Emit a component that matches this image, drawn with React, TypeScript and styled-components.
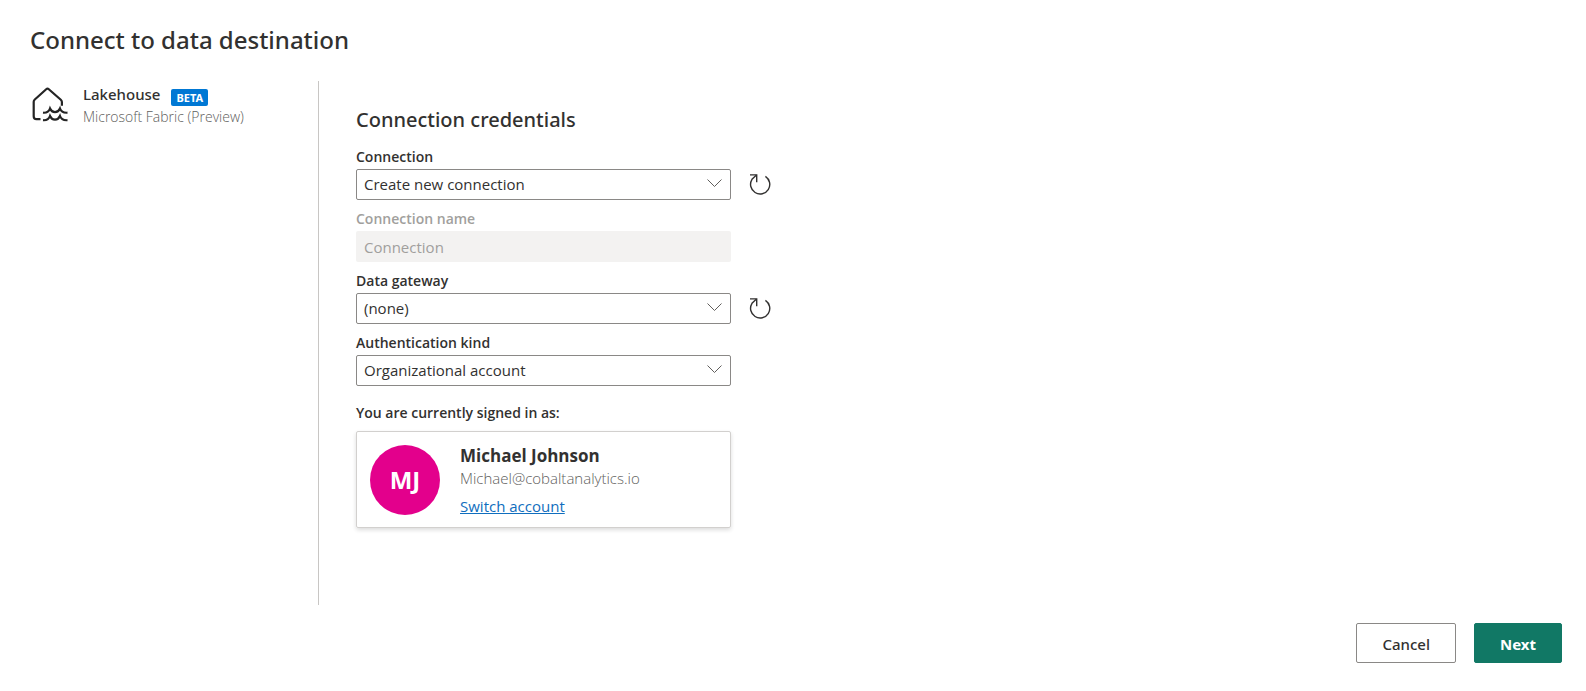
import React from "react";
import styled, { createGlobalStyle } from "styled-components";

const mediumFont = `"Segoe UI", "Noto Sans", sans-serif`;

const GlobalStyle = createGlobalStyle`
  *, *::before, *::after { box-sizing: border-box; }
  body {
    margin: 0;
    background: #fff;
    color: #323130;
    font-family: "Segoe UI", "Open Sans", "Noto Sans", sans-serif;
    font-size: 15px;
    line-height: 20px;
  }
  button, input, select { font: inherit; color: inherit; }
`;

const Page = styled.div`
  display: flex;
  flex-direction: column;
  min-height: 100vh;
  padding: 24px 24px 28px 30px;
`;

const Title = styled.h1`
  margin: 0;
  font-family: ${mediumFont};
  font-size: 24px;
  line-height: 32px;
  font-weight: 500;
`;

const Body = styled.div`
  display: flex;
  flex: 1;
  margin: 25px 0 18px;
`;

const Source = styled.aside`
  display: flex;
  align-items: flex-start;
  gap: 15px;
  width: 289px;
  padding-top: 3px;
  border-right: 1px solid #c8c6c4;
`;

const SourceName = styled.div`
  display: flex;
  align-items: flex-start;
  gap: 11px;
  font-family: ${mediumFont};
  font-size: 15px;
  line-height: 20px;
  font-weight: 500;
`;

const Badge = styled.span`
  margin-top: 5px;
  padding: 0 5px;
  border-radius: 2px;
  background: #0078d4;
  color: #fff;
  font-size: 11px;
  line-height: 17px;
  font-weight: 700;
`;

const Muted = styled.div<{ $size: number }>`
  font-size: ${(p) => p.$size}px;
  line-height: 22px;
  font-weight: 300;
  color: #605e5c;
`;

const Form = styled.form`
  flex: 1;
  padding: 24px 0 0 37px;
`;

const SectionTitle = styled.h2`
  margin: 0 0 12px;
  font-family: ${mediumFont};
  font-size: 20px;
  line-height: 30px;
  font-weight: 500;
`;

const Field = styled.div`
  display: flex;
  flex-direction: column;
  gap: 2px;
  margin-bottom: 9px;
`;

const Label = styled.label<{ $disabled?: boolean }>`
  font-size: 14px;
  line-height: 20px;
  font-weight: 600;
  color: ${(p) => (p.$disabled ? "#a19f9d" : "#323130")};
`;

const Row = styled.div`
  display: flex;
  align-items: center;
  gap: 18px;
`;

const SelectBox = styled.div`
  position: relative;
  width: 375px;
`;

const Select = styled.select`
  display: block;
  width: 100%;
  height: 31px;
  padding: 0 32px 1px 7px;
  border: 1px solid #8a8886;
  border-radius: 2px;
  background: #fff;
  appearance: none;
`;

const Chevron = styled.svg`
  position: absolute;
  top: 9px;
  right: 9px;
  pointer-events: none;
`;

const TextInput = styled.input`
  width: 375px;
  height: 31px;
  padding: 0 8px;
  border: 0;
  border-radius: 2px;
  background: #f3f2f1;
  color: #a19f9d;
  &::placeholder { color: #a19f9d; opacity: 1; }
`;

const IconButton = styled.button`
  display: flex;
  padding: 0;
  border: 0;
  background: none;
`;

const SignedIn = styled.p`
  margin: 17px 0 8px;
  font-size: 14px;
  line-height: 20px;
  font-weight: 600;
`;

const Card = styled.section`
  display: flex;
  gap: 20px;
  width: 375px;
  padding: 12px 13px 11px;
  border: 1px solid #d2d0ce;
  border-radius: 2px;
  box-shadow: 0 2px 4px rgba(0, 0, 0, 0.14);
`;

const Avatar = styled.div`
  display: grid;
  place-items: center;
  width: 70px;
  height: 70px;
  margin-top: 1px;
  border-radius: 50%;
  background: #e3008c;
  color: #fff;
  font-size: 24px;
  font-weight: 700;
`;

const Person = styled.div`
  display: flex;
  flex-direction: column;
  align-items: flex-start;
`;

const PersonName = styled.div`
  font-size: 17px;
  line-height: 23px;
  font-weight: 700;
`;

const Link = styled.a`
  margin-top: 7px;
  color: #106ebe;
  line-height: 20px;
`;

const Footer = styled.footer`
  display: flex;
  justify-content: flex-end;
  gap: 18px;
`;

const Button = styled.button<{ $primary?: boolean }>`
  height: 40px;
  padding: 1px 25px 0;
  border: 1px solid ${(p) => (p.$primary ? "#117865" : "#8a8886")};
  border-radius: 2px;
  background: ${(p) => (p.$primary ? "#117865" : "#fff")};
  color: ${(p) => (p.$primary ? "#fff" : "#323130")};
  font-family: ${mediumFont};
  font-weight: ${(p) => (p.$primary ? 700 : 500)};
`;

const LakehouseIcon = () => (
  <svg width="38" height="38" viewBox="0 0 38 38" fill="none" stroke="#242424" strokeWidth="2.2" aria-hidden="true">
    <path d="M10.500 35.200H6.500Q3.700 35.200 3.700 32.200V17.800Q3.700 16.500 4.800 15.500L16.200 5.200Q17.500 4 18.800 5.200L30.800 15.800Q31.900 16.800 31.900 18V21.800" />
    <path d="M13 28.700C16.500 29 19 27.500 20 24.500C22 29.200 28 29.200 30 24.500C31 27.500 33.500 29 37.500 28.700" />
    <path d="M13 36.200C16.500 36.500 19 35 20 32C22 36.700 28 36.700 30 32C31 35 33.500 36.500 37.500 36.200" />
  </svg>
);

const RefreshButton = ({ label }: { label: string }) => (
  <IconButton type="button" aria-label={label}>
    <svg width="22" height="22" viewBox="0 0 22 22" fill="none" stroke="#323130" strokeWidth="1.4" aria-hidden="true">
      <path d="M16.400 2.300A9.600 9.600 0 1 1 3 5.300L7.500 0.900" />
      <path d="M1 0.900H7.700V8.200" />
    </svg>
  </IconButton>
);

const Dropdown = ({ id, label, value, refresh }: { id: string; label: string; value: string; refresh?: string }) => (
  <Field>
    <Label htmlFor={id}>{label}</Label>
    <Row>
      <SelectBox>
        <Select id={id} defaultValue={value}>
          <option>{value}</option>
        </Select>
        <Chevron width="15" height="12" viewBox="0 0 15 12" fill="none" stroke="#605e5c" aria-hidden="true">
          <path d="M0.500 1.500L7.500 8.500L14.500 1.500" />
        </Chevron>
      </SelectBox>
      {refresh && <RefreshButton label={refresh} />}
    </Row>
  </Field>
);

export default function App() {
  return (
    <>
      <GlobalStyle />
      <Page>
        <Title>Connect to data destination</Title>
        <Body>
          <Source>
            <LakehouseIcon />
            <div>
              <SourceName>
                Lakehouse <Badge>BETA</Badge>
              </SourceName>
              <Muted $size={14}>Microsoft Fabric (Preview)</Muted>
            </div>
          </Source>
          <Form>
            <SectionTitle>Connection credentials</SectionTitle>
            <Dropdown id="connection" label="Connection" value="Create new connection" refresh="Refresh connections" />
            <Field>
              <Label htmlFor="connection-name" $disabled>Connection name</Label>
              <TextInput id="connection-name" placeholder="Connection" disabled />
            </Field>
            <Dropdown id="gateway" label="Data gateway" value="(none)" refresh="Refresh gateways" />
            <Dropdown id="auth-kind" label="Authentication kind" value="Organizational account" />
            <SignedIn>You are currently signed in as:</SignedIn>
            <Card>
              <Avatar>MJ</Avatar>
              <Person>
                <PersonName>Michael Johnson</PersonName>
                <Muted $size={15}>Michael@cobaltanalytics.io</Muted>
                <Link href="#switch">Switch account</Link>
              </Person>
            </Card>
          </Form>
        </Body>
        <Footer>
          <Button type="button">Cancel</Button>
          <Button type="button" $primary>Next</Button>
        </Footer>
      </Page>
    </>
  );
}
